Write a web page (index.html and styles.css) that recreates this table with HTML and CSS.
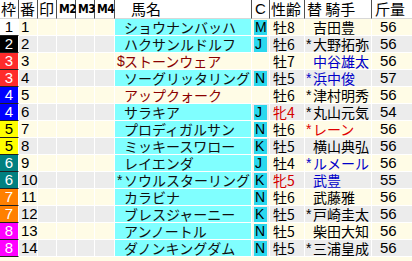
FILE: index.html
```html
<!DOCTYPE html>
<html lang="ja">
<head>
<meta charset="utf-8">
<link rel="stylesheet" href="styles.css">
</head>
<body>
<div class="grid">
  <div class="row head">
    <div class="cell">枠</div><div class="cell">番</div><div class="cell">印</div><div class="cell mh">M2</div><div class="cell mh">M3</div><div class="cell mh">M4</div>
    <div class="cell h-name">馬名</div><div class="cell h-c">C</div><div class="cell">性齢</div><div class="cell h-jockey">替&nbsp;騎手</div><div class="cell h-kin">斤量</div>
  </div>

  <div class="row odd"><div class="cell waku w1">1</div><div class="cell ban">1</div><div class="cell"></div><div class="cell"></div><div class="cell"></div><div class="cell"></div><div class="cell name reg"><span class="pre"></span>ショウナンバッハ</div><div class="cell c"><span class="cb">M</span></div><div class="cell sex">牡8</div><div class="cell jk"><span class="pre"></span>吉田豊</div><div class="cell kin">56</div></div>
  <div class="row even"><div class="cell waku w2">2</div><div class="cell ban">2</div><div class="cell"></div><div class="cell"></div><div class="cell"></div><div class="cell"></div><div class="cell name reg"><span class="pre"></span>ハクサンルドルフ</div><div class="cell c"><span class="cb">J</span></div><div class="cell sex">牡6</div><div class="cell jk"><span class="pre">*</span>大野拓弥</div><div class="cell kin">56</div></div>
  <div class="row odd"><div class="cell waku w3">3</div><div class="cell ban">3</div><div class="cell"></div><div class="cell"></div><div class="cell"></div><div class="cell"></div><div class="cell name unreg"><span class="pre">$</span>ストーンウェア</div><div class="cell c"></div><div class="cell sex">牡7</div><div class="cell jk blue"><span class="pre"></span>中谷雄太</div><div class="cell kin">56</div></div>
  <div class="row even"><div class="cell waku w3">3</div><div class="cell ban">4</div><div class="cell"></div><div class="cell"></div><div class="cell"></div><div class="cell"></div><div class="cell name reg"><span class="pre"></span>ソーグリッタリング</div><div class="cell c"><span class="cb">N</span></div><div class="cell sex">牡5</div><div class="cell jk blue"><span class="pre">*</span>浜中俊</div><div class="cell kin">57</div></div>
  <div class="row odd"><div class="cell waku w4">4</div><div class="cell ban">5</div><div class="cell"></div><div class="cell"></div><div class="cell"></div><div class="cell"></div><div class="cell name unreg"><span class="pre"></span>アップクォーク</div><div class="cell c"></div><div class="cell sex">牡6</div><div class="cell jk"><span class="pre">*</span>津村明秀</div><div class="cell kin">56</div></div>
  <div class="row even"><div class="cell waku w4">4</div><div class="cell ban">6</div><div class="cell"></div><div class="cell"></div><div class="cell"></div><div class="cell"></div><div class="cell name reg"><span class="pre"></span>サラキア</div><div class="cell c"><span class="cb">J</span></div><div class="cell sex mare">牝4</div><div class="cell jk"><span class="pre">*</span>丸山元気</div><div class="cell kin">54</div></div>
  <div class="row odd"><div class="cell waku w5">5</div><div class="cell ban">7</div><div class="cell"></div><div class="cell"></div><div class="cell"></div><div class="cell"></div><div class="cell name reg"><span class="pre"></span>プロディガルサン</div><div class="cell c"><span class="cb">N</span></div><div class="cell sex">牡6</div><div class="cell jk red"><span class="pre">*</span>レーン</div><div class="cell kin">56</div></div>
  <div class="row even"><div class="cell waku w5">5</div><div class="cell ban">8</div><div class="cell"></div><div class="cell"></div><div class="cell"></div><div class="cell"></div><div class="cell name reg"><span class="pre"></span>ミッキースワロー</div><div class="cell c"><span class="cb">K</span></div><div class="cell sex">牡5</div><div class="cell jk"><span class="pre"></span>横山典弘</div><div class="cell kin">56</div></div>
  <div class="row odd"><div class="cell waku w6">6</div><div class="cell ban">9</div><div class="cell"></div><div class="cell"></div><div class="cell"></div><div class="cell"></div><div class="cell name reg"><span class="pre"></span>レイエンダ</div><div class="cell c"><span class="cb">J</span></div><div class="cell sex">牡4</div><div class="cell jk blue"><span class="pre">*</span>ルメール</div><div class="cell kin">56</div></div>
  <div class="row even"><div class="cell waku w6">6</div><div class="cell ban">10</div><div class="cell"></div><div class="cell"></div><div class="cell"></div><div class="cell"></div><div class="cell name reg"><span class="pre">*</span>ソウルスターリング</div><div class="cell c"><span class="cb">K</span></div><div class="cell sex mare">牝5</div><div class="cell jk blue"><span class="pre"></span>武豊</div><div class="cell kin">55</div></div>
  <div class="row odd"><div class="cell waku w7">7</div><div class="cell ban">11</div><div class="cell"></div><div class="cell"></div><div class="cell"></div><div class="cell"></div><div class="cell name reg"><span class="pre"></span>カラビナ</div><div class="cell c"><span class="cb">N</span></div><div class="cell sex">牡6</div><div class="cell jk"><span class="pre"></span>武藤雅</div><div class="cell kin">56</div></div>
  <div class="row even"><div class="cell waku w7">7</div><div class="cell ban">12</div><div class="cell"></div><div class="cell"></div><div class="cell"></div><div class="cell"></div><div class="cell name reg"><span class="pre"></span>ブレスジャーニー</div><div class="cell c"><span class="cb">K</span></div><div class="cell sex">牡5</div><div class="cell jk"><span class="pre">*</span>戸崎圭太</div><div class="cell kin">56</div></div>
  <div class="row odd"><div class="cell waku w8">8</div><div class="cell ban">13</div><div class="cell"></div><div class="cell"></div><div class="cell"></div><div class="cell"></div><div class="cell name reg"><span class="pre"></span>アンノートル</div><div class="cell c"><span class="cb">N</span></div><div class="cell sex">牡5</div><div class="cell jk"><span class="pre"></span>柴田大知</div><div class="cell kin">56</div></div>
  <div class="row even"><div class="cell waku w8">8</div><div class="cell ban">14</div><div class="cell"></div><div class="cell"></div><div class="cell"></div><div class="cell"></div><div class="cell name reg"><span class="pre"></span>ダノンキングダム</div><div class="cell c"><span class="cb">N</span></div><div class="cell sex">牡5</div><div class="cell jk"><span class="pre">*</span>三浦皇成</div><div class="cell kin">56</div></div>
</div>
</body>
</html>
```

FILE: styles.css
```css
html, body {
  margin: 0;
  padding: 0;
  background: #fffce6;
}
body {
  font-family: "Noto Sans CJK JP", "Liberation Sans", sans-serif;
  font-size: 14px;
  color: #000;
}
.grid {
  width: 412px;
}
.row {
  display: grid;
  grid-template-columns: 19px 19px 19px 19px 19px 20px 137px 18px 35px 67px 40px;
  height: 17px;
}
.cell {
  box-sizing: border-box;
  display: flex;
  align-items: center;
  white-space: nowrap;
  line-height: 16px;
  border-right: 1px solid #ffffff;
  border-bottom: 1px solid #ffffff;
}
.row.odd .cell { background: #fffce6; }
.row.even .cell { background: #ececec; }

/* header */
.row.head { height: 19px; }
.row.head .cell {
  background: #ffffff;
  font-size: 15px;
  line-height: 18px;
  padding-left: 1px;
  border-right: 1px solid #505050;
  border-bottom: 1px solid #d8d8d8;
}
.row.head .mh {
  font-family: "DejaVu Sans Condensed", "DejaVu Sans", sans-serif;
  font-weight: bold;
  font-size: 12px;
  letter-spacing: -0.5px;
  padding-left: 2px;
}
.row.head .h-name { padding-left: 16px; }
.row.head .h-c { padding-left: 3px; font-family: "Liberation Sans", sans-serif; }
.row.head .h-jockey { padding-left: 2px; }
.row.head .h-kin { padding-left: 3px; border-right: none; }

/* frame number */
.row .cell.waku {
  justify-content: center;
  font-family: "Liberation Sans", sans-serif;
  font-size: 15px;
  color: #fff;
  border-bottom: 1px solid #202020;
}
.row .cell.w1 { background: #ffffff; color: #000; }
.row .cell.w2 { background: #000000; }
.row .cell.w3 { background: #ff2b2b; }
.row .cell.w4 { background: #0000ff; }
.row .cell.w5 { background: #ffff00; color: #000; }
.row .cell.w6 { background: #008080; }
.row .cell.w7 { background: #ff8000; }
.row .cell.w8 { background: #ff00ff; }

.ban {
  font-family: "Liberation Sans", sans-serif;
  font-size: 15px;
  padding-left: 2px;
}
.row .cell.name { padding-left: 2px; }
.row .cell.reg { background: #80ffff; color: #101010; }
.row .cell.unreg { color: #8a0000; }
.pre {
  flex: none;
  width: 7px;
  font-family: "Liberation Sans", sans-serif;
}
.c { padding: 0 2px; }
.cb {
  flex: 1;
  height: 15px;
  line-height: 15px;
  background: #2bd8ee;
  font-family: "Liberation Sans", sans-serif;
  font-size: 14px;
  padding-left: 1px;
}
.sex { padding-left: 3px; }
.row .cell.mare { color: #d40000; }
.jk { padding-left: 1px; }
.row .cell.blue { color: #0000c8; }
.row .cell.red { color: #e00000; }
.kin {
  font-family: "Liberation Sans", sans-serif;
  font-size: 15px;
  padding-left: 8px;
}
.row .cell.kin { border-right: none; }
```
